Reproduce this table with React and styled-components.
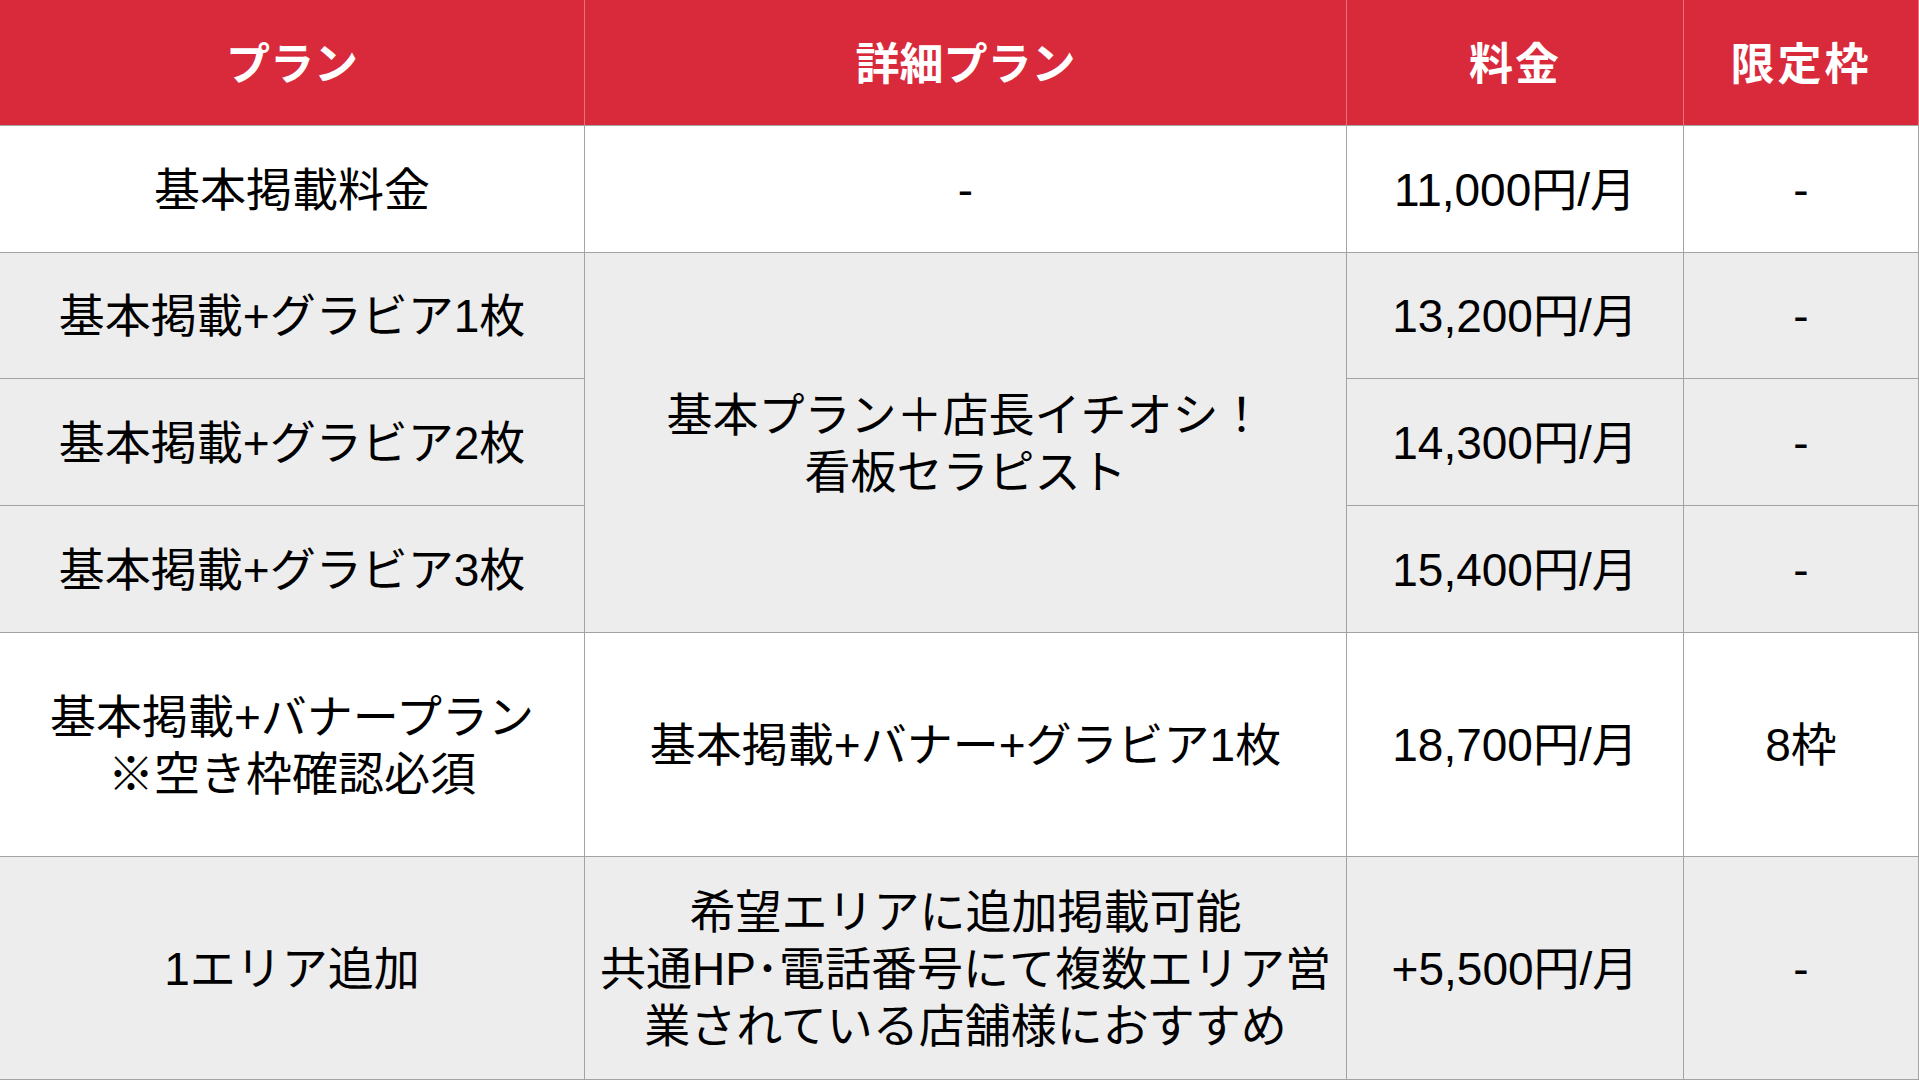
import React from "react";
import styled, { createGlobalStyle } from "styled-components";

const Global = createGlobalStyle`
  html, body { margin: 0; padding: 0; background: #ffffff; }
  body { font-family: "Liberation Sans", "Noto Sans CJK JP", sans-serif; }
`;

const Table = styled.div`
  display: grid;
  grid-template-columns: 585px 762px 337px 235px;
  grid-template-rows: 126px 127px 126px 127px 127px 224px 223px;
  width: 1919px;
  height: 1080px;
  font-family: "Liberation Sans", "Noto Sans CJK JP", sans-serif;
  color: #000;
`;

const Head = styled.div`
  display: flex;
  align-items: center;
  justify-content: center;
  background: #d92a3b;
  color: #fff;
  font-weight: 700;
  font-size: 44px;
  letter-spacing: ${(p) => p.$spacing || "0px"};
  box-sizing: border-box;
  border-right: 1px solid rgba(255, 255, 255, 0.35);
  border-bottom: 1px solid #a3a3a3;
  padding-bottom: 4px;
  &:last-child { border-right: 1px solid #a3a3a3; }
`;

const Cell = styled.div`
  display: flex;
  align-items: center;
  justify-content: center;
  text-align: center;
  box-sizing: border-box;
  background: ${(p) => (p.$shade ? "#ededed" : "#ffffff")};
  border-right: 1px solid #a3a3a3;
  border-bottom: 1px solid #a3a3a3;
  font-size: 46px;
  line-height: 57px;
  white-space: pre-line;
  grid-row: ${(p) => p.$row || "auto"};
  padding-top: 2px;
`;

const rows = [
  { plan: "基本掲載料金", detail: "-", price: "11,000円/月", limit: "-", shade: false },
  { plan: "基本掲載+グラビア1枚", detail: "基本プラン＋店長イチオシ！\n看板セラピスト", span: 3, price: "13,200円/月", limit: "-", shade: true },
  { plan: "基本掲載+グラビア2枚", price: "14,300円/月", limit: "-", shade: true },
  { plan: "基本掲載+グラビア3枚", price: "15,400円/月", limit: "-", shade: true },
  { plan: "基本掲載+バナープラン\n※空き枠確認必須", detail: "基本掲載+バナー+グラビア1枚", price: "18,700円/月", limit: "8枠", shade: false },
  { plan: "1エリア追加", detail: "希望エリアに追加掲載可能\n共通HP･電話番号にて複数エリア営\n業されている店舗様におすすめ", price: "+5,500円/月", limit: "-", shade: true },
];

export default function App() {
  return (
    <>
      <Global />
      <Table>
        <Head>プラン</Head>
        <Head>詳細プラン</Head>
        <Head $spacing="2px">料金</Head>
        <Head $spacing="3px">限定枠</Head>
        {rows.map((r, i) => (
          <React.Fragment key={i}>
            <Cell $shade={r.shade}>{r.plan}</Cell>
            {r.detail !== undefined && (
              <Cell $shade={r.shade} $row={r.span ? `span ${r.span}` : undefined}>
                {r.detail}
              </Cell>
            )}
            <Cell $shade={r.shade}>{r.price}</Cell>
            <Cell $shade={r.shade}>{r.limit}</Cell>
          </React.Fragment>
        ))}
      </Table>
    </>
  );
}
